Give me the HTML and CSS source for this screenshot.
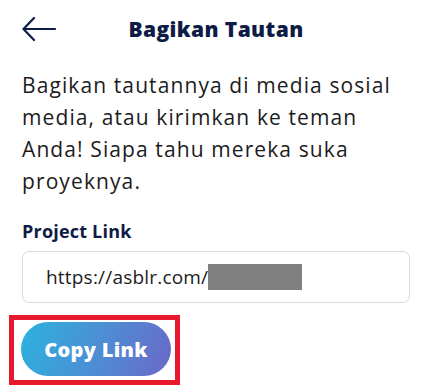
FILE: index.html
```html
<!DOCTYPE html>
<html lang="id">
<head>
<meta charset="utf-8">
<link rel="stylesheet" href="styles.css">
</head>
<body>
<div class="page">
  <header class="header">
    <button class="back" aria-label="Kembali">
      <svg width="34" height="26" viewBox="0 0 34 26" fill="none" stroke="#0d1b45" stroke-width="2.2" stroke-linecap="round" stroke-linejoin="round">
        <path d="M33 13H2"/>
        <path d="M12 2L1.5 13L12 24"/>
      </svg>
    </button>
    <h1 class="title">Bagikan Tautan</h1>
    <span class="spacer"></span>
  </header>
  <p class="desc">Bagikan tautannya di media sosial media, atau kirimkan ke teman Anda! Siapa tahu mereka suka proyeknya.</p>
  <label class="label">Project Link</label>
  <div class="field">
    <span class="url">https://asblr.com/</span><span class="redact"></span>
  </div>
  <div class="actions">
    <button class="copy">Copy Link</button>
    <span class="highlight"></span>
  </div>
</div>
</body>
</html>
```
FILE: styles.css
```css
* { box-sizing: border-box; }
html, body { margin: 0; padding: 0; background: #fff; }
body { font-family: "Open Sans", "Noto Sans", sans-serif; }
.page { width: 424px; height: 391px; padding: 0 14px 0 22px; overflow: hidden; }
.header { display: grid; grid-template-columns: 80px 1fr 80px; align-items: center; height: 58px; }
.back { border: 0; background: none; padding: 0; margin: 0; width: 34px; height: 26px; display: flex; }
.title { margin: 0; text-align: center; font-size: 21px; font-weight: 800; letter-spacing: 0.4px; color: #0d1b45; white-space: nowrap; }
.desc { margin: 11px 0 0; font-size: 21px; line-height: 32px; letter-spacing: 1.1px; color: #1c1c1c; }
.label { display: block; margin-top: 22px; font-size: 18px; font-weight: 700; letter-spacing: 0.2px; color: #0d1b45; }
.field { margin-top: 8px; height: 52px; border: 1px solid #d9d9de; border-radius: 7px; display: flex; align-items: center; padding-left: 23px; }
.url { font-size: 19px; letter-spacing: 0.2px; color: #1c1c1c; }
.redact { width: 94px; height: 26px; background: #808080; }
.actions { position: relative; margin-top: 19px; }
.copy { display: block; width: 150px; height: 54px; border: 0; border-radius: 27px; margin-left: -1px; background: linear-gradient(110deg, #2bb2df 0%, #4c8fd4 50%, #6b68c8 100%); color: #fff; font-family: inherit; font-size: 20px; font-weight: 800; letter-spacing: 0.3px; }
.highlight { position: absolute; left: -13px; top: -7px; width: 171px; height: 70px; border: 5px solid #e8192c; }
```
